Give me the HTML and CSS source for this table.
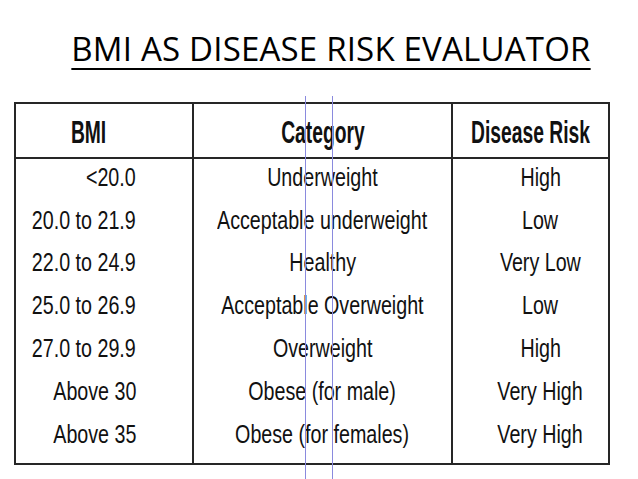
FILE: index.html
```html
<!DOCTYPE html>
<html lang="en">
<head>
<meta charset="utf-8">
<title>BMI as disease risk evaluator</title>
<link rel="stylesheet" href="styles.css">
</head>
<body>
<div class="page">
  <h1 class="title"><span class="title-text">BMI AS DISEASE RISK EVALUATOR</span></h1>
  <div class="bmi-table">
    <div class="cell head c1"><span>BMI</span></div>
    <div class="cell head c2"><span>Category</span></div>
    <div class="cell head c3"><span>Disease Risk</span></div>

    <div class="cell c1"><span>&lt;20.0</span></div>
    <div class="cell c2"><span>Underweight</span></div>
    <div class="cell c3"><span>High</span></div>

    <div class="cell c1"><span>20.0 to 21.9</span></div>
    <div class="cell c2"><span>Acceptable underweight</span></div>
    <div class="cell c3"><span>Low</span></div>

    <div class="cell c1"><span>22.0 to 24.9</span></div>
    <div class="cell c2"><span>Healthy</span></div>
    <div class="cell c3"><span>Very Low</span></div>

    <div class="cell c1"><span>25.0 to 26.9</span></div>
    <div class="cell c2"><span>Acceptable Overweight</span></div>
    <div class="cell c3"><span>Low</span></div>

    <div class="cell c1"><span>27.0 to 29.9</span></div>
    <div class="cell c2"><span>Overweight</span></div>
    <div class="cell c3"><span>High</span></div>

    <div class="cell c1"><span>Above 30</span></div>
    <div class="cell c2"><span>Obese (for male)</span></div>
    <div class="cell c3"><span>Very High</span></div>

    <div class="cell c1 last"><span>Above 35</span></div>
    <div class="cell c2 last"><span>Obese (for females)</span></div>
    <div class="cell c3 last"><span>Very High</span></div>
  </div>
  <div class="guide guide-a"></div>
  <div class="guide guide-b"></div>
</div>
</body>
</html>
```

FILE: styles.css
```css
html, body {
  margin: 0;
  padding: 0;
  background: #ffffff;
}

.page {
  position: relative;
  width: 638px;
  height: 479px;
  overflow: hidden;
  background: #ffffff;
}

.title {
  margin: 0;
  padding: 29px 0 0 24px;
  height: 40px;
  font-family: "Open Sans", "Liberation Sans", sans-serif;
  font-weight: 400;
  font-size: 33px;
  line-height: 40px;
  letter-spacing: 0.2px;
  color: #000;
  text-align: center;
}

.title-text {
  text-decoration: underline;
  text-decoration-thickness: 2px;
  text-underline-offset: 7px;
}

.bmi-table {
  display: grid;
  grid-template-columns: 176px 259px 157px;
  grid-template-rows: 55px repeat(6, 42.8px) 47.2px;
  width: 592px;
  margin: 33px 0 0 14px;
  border: 2px solid #262626;
  font-family: "Liberation Sans", Arial, sans-serif;
  font-size: 24px;
  color: #111;
}

.cell {
  display: flex;
  align-items: center;
  padding-bottom: 7px;
  box-sizing: border-box;
  white-space: nowrap;
}

.cell span {
  display: inline-block;
  transform: scale(0.82, 1.1);
}

.cell.last {
  padding-bottom: 11px;
}

.c2, .c3 {
  border-left: 2px solid #262626;
}

.c1 {
  justify-content: flex-end;
  padding-right: 56px;
}

.c1 span {
  transform-origin: right center;
}

.c2 {
  justify-content: center;
}

.c3 {
  justify-content: center;
  padding-left: 20px;
}

.head {
  border-bottom: 2px solid #262626;
  padding-top: 5px;
  padding-bottom: 0;
  font-weight: 700;
  font-size: 23.5px;
}

.head span {
  transform: scale(0.82, 1.3);
}

.head.c1 {
  justify-content: center;
  padding-right: 30px;
}

.head.c1 span {
  transform-origin: center center;
}

.head.c3 {
  padding-left: 0;
}

.guide {
  position: absolute;
  top: 96px;
  bottom: 0;
  width: 1px;
  background: #8a8ade;
}

.guide-a {
  left: 305px;
}

.guide-b {
  left: 332px;
}
```
